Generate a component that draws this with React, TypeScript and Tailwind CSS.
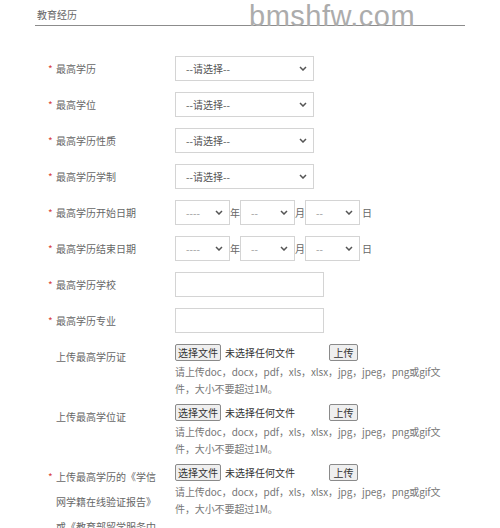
import React from 'react';

const cjk = "font-['Noto_Sans_CJK_SC','Liberation_Sans',sans-serif]";

function Chevron() {
  return (
    <svg width="8" height="5" viewBox="0 0 8 5" className="shrink-0">
      <path d="M1 1l3 3 3-3" fill="none" stroke="#555" strokeWidth="1.5" />
    </svg>
  );
}

function Label({ text, required }: { text: string; required?: boolean }) {
  return (
    <div className="flex w-[127px] shrink-0 text-[10px] text-[#666]">
      <span className="w-[8px] shrink-0 text-[#d9453d]">{required ? '*' : ''}</span>
      <span className="w-[100px]">{text}</span>
    </div>
  );
}

function Select({ w, text, light }: { w: string; text: string; light?: boolean }) {
  return (
    <div className={`${w} h-[25px] border border-[#d4d4d4] bg-white flex items-center justify-between pl-[10px] pr-[6px] text-[10px] ${light ? 'text-[#999]' : 'text-[#555]'}`}>
      <span>{text}</span>
      <Chevron />
    </div>
  );
}

function Row({ label, required, children }: { label: string; required?: boolean; children: React.ReactNode }) {
  return (
    <div className="flex items-center h-[36px]">
      <Label text={label} required={required} />
      {children}
    </div>
  );
}

function DatePicker() {
  return (
    <div className="flex items-center text-[10px] text-[#666]">
      <Select w="w-[55px]" text="----" light />
      <span className="w-[10px]">年</span>
      <Select w="w-[55px]" text="--" light />
      <span className="w-[10px]">月</span>
      <Select w="w-[55px]" text="--" light />
      <span className="w-[10px] ml-[2px]">日</span>
    </div>
  );
}

function Upload({ label, required }: { label: string; required?: boolean }) {
  return (
    <div className="flex mb-[7px]">
      <div className="flex w-[127px] shrink-0 text-[10px] text-[#666] leading-[25px]">
        <span className="w-[8px] shrink-0 text-[#d9453d]">{required ? '*' : ''}</span>
        <span className="w-[100px]">{label}</span>
      </div>
      <div className="flex flex-col">
        <div className="flex items-center h-[17px] text-[10px] text-[#333]">
          <div className="flex items-center w-[154px]">
            <button className="h-[17px] w-[46px] border border-[#8a8a8a] rounded-[2px] bg-[#efefef] leading-none">选择文件</button>
            <span className="ml-[4px]">未选择任何文件</span>
          </div>
          <button className="h-[17px] w-[29px] border border-[#8a8a8a] rounded-[2px] bg-[#efefef] leading-none">上传</button>
        </div>
        <div className="mt-[2px] text-[10px] leading-[17px] text-[#777] tracking-[-0.1px]">
          <div className="whitespace-nowrap">请上传doc，docx，pdf，xls，xlsx，jpg，jpeg，png或gif文</div>
          <div className="whitespace-nowrap">件，大小不要超过1M。</div>
        </div>
      </div>
    </div>
  );
}

export default function App() {
  return (
    <div className={`w-[500px] h-[528px] overflow-hidden bg-white ${cjk}`}>
      {/* section title with rule */}
      <div className="relative mx-[35px] h-[26px] border-b border-[#8c8c8c] pt-[8px] pl-[2px] text-[10px] leading-[14px] text-[#666]">
        教育经历
        <span className="absolute left-[214px] top-[2px] font-['Liberation_Sans',sans-serif] text-[29px] leading-[29px] tracking-[0.5px] text-[#acacac]">
          bmshfw.com
        </span>
      </div>

      <div className="mt-[24px] pl-[48px]">
        <Row label="最高学历" required><Select w="w-[139px]" text="--请选择--" /></Row>
        <Row label="最高学位" required><Select w="w-[139px]" text="--请选择--" /></Row>
        <Row label="最高学历性质" required><Select w="w-[139px]" text="--请选择--" /></Row>
        <Row label="最高学历学制" required><Select w="w-[139px]" text="--请选择--" /></Row>
        <Row label="最高学历开始日期" required><DatePicker /></Row>
        <Row label="最高学历结束日期" required><DatePicker /></Row>
        <Row label="最高学历学校" required><div className="w-[149px] h-[25px] border border-[#d4d4d4] bg-white" /></Row>
        <Row label="最高学历专业" required><div className="w-[149px] h-[25px] border border-[#d4d4d4] bg-white" /></Row>

        <div className="mt-[6px]">
          <Upload label="上传最高学历证" />
          <Upload label="上传最高学位证" />
          <Upload label="上传最高学历的《学信网学籍在线验证报告》或《教育部留学服务中心国外学历学位认证书》" required />
        </div>
      </div>
    </div>
  );
}
